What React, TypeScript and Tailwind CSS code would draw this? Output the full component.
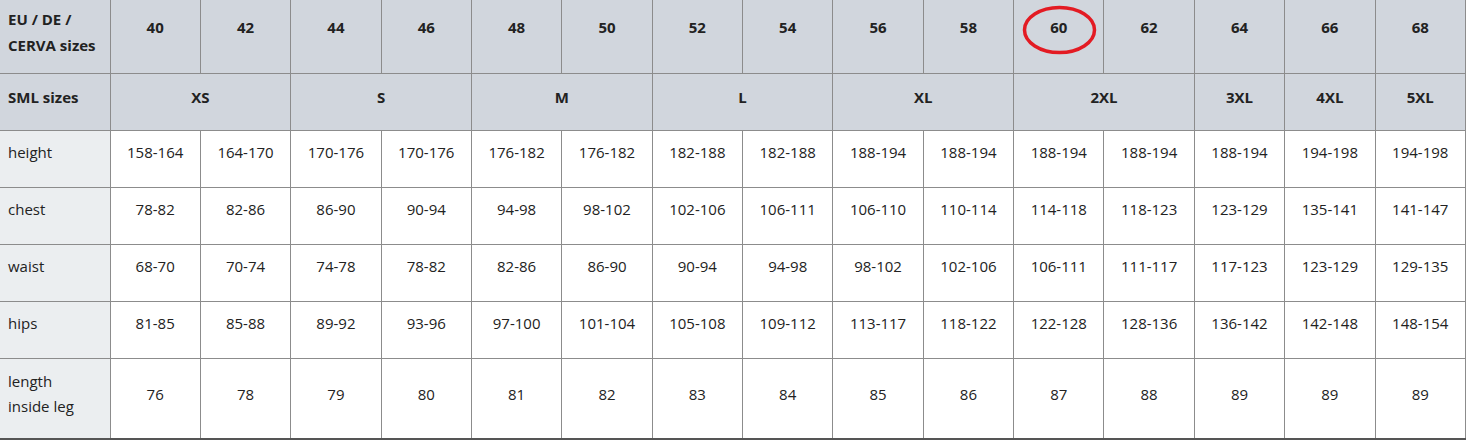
const euSizes = ["40", "42", "44", "46", "48", "50", "52", "54", "56", "58", "60", "62", "64", "66", "68"];

const smlSizes: { label: string; span: number }[] = [
  { label: "XS", span: 2 },
  { label: "S", span: 2 },
  { label: "M", span: 2 },
  { label: "L", span: 2 },
  { label: "XL", span: 2 },
  { label: "2XL", span: 2 },
  { label: "3XL", span: 1 },
  { label: "4XL", span: 1 },
  { label: "5XL", span: 1 },
];

const rows: { label: string; values: string[]; tall?: boolean }[] = [
  {
    label: "height",
    values: ["158-164", "164-170", "170-176", "170-176", "176-182", "176-182", "182-188", "182-188", "188-194", "188-194", "188-194", "188-194", "188-194", "194-198", "194-198"],
  },
  {
    label: "chest",
    values: ["78-82", "82-86", "86-90", "90-94", "94-98", "98-102", "102-106", "106-111", "106-110", "110-114", "114-118", "118-123", "123-129", "135-141", "141-147"],
  },
  {
    label: "waist",
    values: ["68-70", "70-74", "74-78", "78-82", "82-86", "86-90", "90-94", "94-98", "98-102", "102-106", "106-111", "111-117", "117-123", "123-129", "129-135"],
  },
  {
    label: "hips",
    values: ["81-85", "85-88", "89-92", "93-96", "97-100", "101-104", "105-108", "109-112", "113-117", "118-122", "122-128", "128-136", "136-142", "142-148", "148-154"],
  },
  {
    label: "length inside leg",
    values: ["76", "78", "79", "80", "81", "82", "83", "84", "85", "86", "87", "88", "89", "89", "89"],
    tall: true,
  },
];

export default function App() {
  return (
    <div className="w-[1466px] h-[444px] bg-white font-['Open_Sans',sans-serif] text-[15px] text-[#222]">
      <table className="w-[1466px] table-fixed border-collapse">
        <colgroup>
          <col className="w-[110px]" />
          {euSizes.map((s) => (
            <col key={s} />
          ))}
        </colgroup>
        <thead>
          <tr className="h-[73px] bg-[#d1d6dd]">
            <th className="border-r border-b border-[#8c8c8c] px-2 text-left font-bold leading-[26px] align-middle pb-[8px]">
              EU / DE /<br />
              CERVA sizes
            </th>
            {euSizes.map((s) => (
              <th key={s} className="relative border-r border-b border-[#8c8c8c] font-bold text-center align-middle pb-[18px]">
                {s}
                {s === "60" && (
                  <svg className="absolute left-[7px] top-[5px]" width="78" height="52" viewBox="0 0 78 52">
                    <ellipse cx="38.5" cy="25" rx="35" ry="22.5" fill="none" stroke="#e31b23" strokeWidth="3.5" />
                  </svg>
                )}
              </th>
            ))}
          </tr>
          <tr className="h-[57px] bg-[#d1d6dd]">
            <th className="border-r border-b border-[#8c8c8c] px-2 text-left font-bold pb-[8px]">SML sizes</th>
            {smlSizes.map((s) => (
              <th key={s.label} colSpan={s.span} className="border-r border-b border-[#8c8c8c] font-bold text-center pb-[8px]">
                {s.label}
              </th>
            ))}
          </tr>
        </thead>
        <tbody>
          {rows.map((r) => (
            <tr key={r.label} className={r.tall ? "h-[81px]" : "h-[57px]"}>
              <td className={`bg-[#ebeef0] border-r border-[#8c8c8c] px-2 text-left font-normal ${r.tall ? "border-b-2 border-b-[#555] leading-[25px] pr-8 pb-[8px]" : "border-b pb-[12px]"}`}>
                {r.label}
              </td>
              {r.values.map((v, i) => (
                <td key={i} className={`border-r border-[#8c8c8c] text-center ${r.tall ? "border-b-2 border-b-[#555] pb-[8px]" : "border-b pb-[12px]"}`}>
                  {v}
                </td>
              ))}
            </tr>
          ))}
        </tbody>
      </table>
    </div>
  );
}
